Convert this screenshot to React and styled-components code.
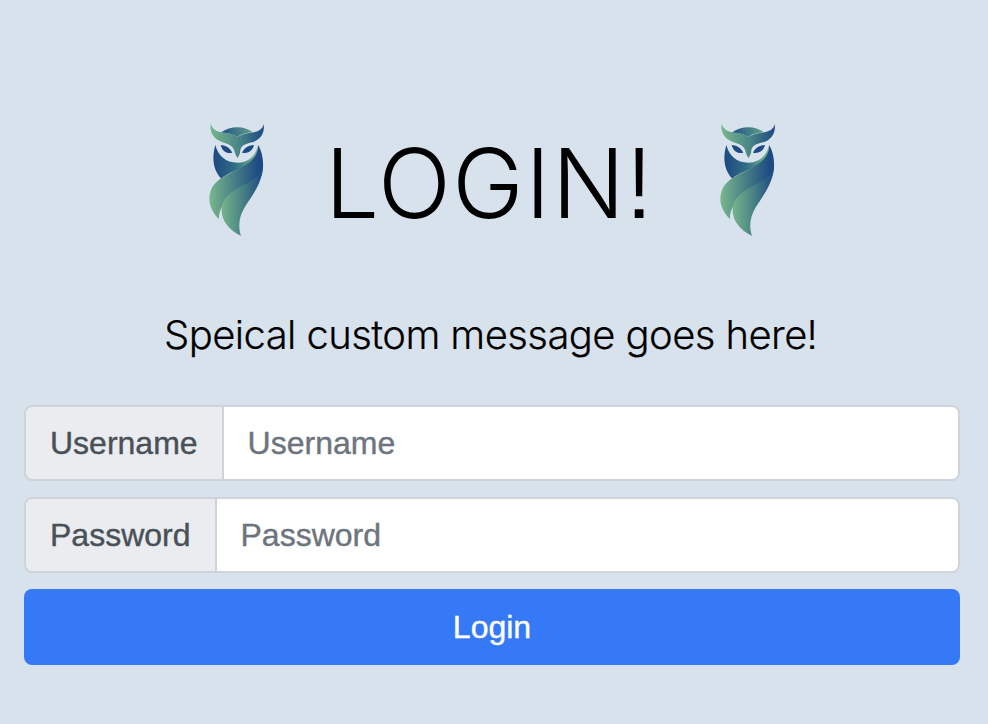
import React from "react";
import styled, { createGlobalStyle } from "styled-components";

const GlobalStyle = createGlobalStyle`
  *, *::before, *::after { box-sizing: border-box; }
  body {
    margin: 0;
    background: #d8e2ec;
    font-family: "Liberation Sans", Arial, sans-serif;
  }
`;

const Page = styled.main`
  min-height: 724px;
  padding: 115px 28px 59px 24px;
  background: #d8e2ec;
`;

const Header = styled.header`
  display: flex;
  justify-content: center;
  height: 130px;
`;

const OwlArt = styled.svg`
  flex: none;
  width: 75px;
  height: 130px;
`;

const Title = styled.h1`
  flex: none;
  width: 436px;
  margin: 0;
  padding: 3px 0 0 51px;
  font: 300 96px/130px "Inter", sans-serif;
  font-feature-settings: "ss07" 1;
  letter-spacing: 1.5px;
  color: #000;
  white-space: nowrap;
`;

const Message = styled.p`
  margin: 65px 0 45px;
  padding-left: 140px;
  font: 300 40px/50px "Inter", sans-serif;
  font-feature-settings: "ss07" 1;
  letter-spacing: -0.59px;
  -webkit-text-stroke: 0.2px #000;
  color: #000;
  white-space: nowrap;
`;

const Form = styled.form`
  display: flex;
  flex-direction: column;
  gap: 16px;
`;

const InputGroup = styled.div`
  display: flex;
  height: 76px;
`;

const FieldLabel = styled.label`
  flex: none;
  padding: 0 24px;
  border: 2px solid #ced4d9;
  border-radius: 8px 0 0 8px;
  background: #eaecef;
  color: #495057;
  font-size: 32px;
  line-height: 72px;
  -webkit-text-stroke: 0.4px currentColor;
`;

const FieldInput = styled.input`
  flex: 1;
  min-width: 0;
  margin-left: -2px;
  padding: 0 24px;
  border: 2px solid #ced4d9;
  border-radius: 0 8px 8px 0;
  background: #fff;
  color: #495057;
  font: 32px "Liberation Sans", Arial, sans-serif;
  outline: none;

  &::placeholder {
    color: #6c757d;
    opacity: 1;
    -webkit-text-stroke: 0.4px #6c757d;
  }
`;

const SubmitButton = styled.button`
  height: 76px;
  padding: 0;
  border: 0;
  border-radius: 8px;
  background: #3579f7;
  color: #fff;
  font: 32px "Liberation Sans", Arial, sans-serif;
  -webkit-text-stroke: 0.4px #fff;
`;

function Owl({ id }) {
  const url = (name) => `url(#${id}-${name})`;
  return (
    <OwlArt viewBox="0 0 225 390" aria-hidden="true">
      <defs>
        <linearGradient id={`${id}-brow`} x1="34" x2="195" y1="0" y2="0" gradientUnits="userSpaceOnUse">
          <stop offset="0" stopColor="#77b58c" />
          <stop offset=".5" stopColor="#4c8986" />
          <stop offset="1" stopColor="#1c4a83" />
        </linearGradient>
        <linearGradient id={`${id}-crown`} x1="65" x2="162" y1="0" y2="0" gradientUnits="userSpaceOnUse">
          <stop offset="0" stopColor="#20508a" />
          <stop offset="1" stopColor="#63a286" />
        </linearGradient>
        <linearGradient id={`${id}-body`} x1="43" x2="192" y1="0" y2="0" gradientUnits="userSpaceOnUse">
          <stop offset="0" stopColor="#1c4982" />
          <stop offset=".45" stopColor="#326e84" />
          <stop offset=".86" stopColor="#74b58a" />
          <stop offset="1" stopColor="#74b58a" />
        </linearGradient>
        <linearGradient id={`${id}-wing`} x1="32" x2="180" y1="0" y2="0" gradientUnits="userSpaceOnUse">
          <stop offset="0" stopColor="#78b78d" />
          <stop offset=".5" stopColor="#477f85" />
          <stop offset="1" stopColor="#1d4a83" />
        </linearGradient>
        <linearGradient id={`${id}-tail`} x1="68" x2="190" y1="0" y2="0" gradientUnits="userSpaceOnUse">
          <stop offset="0" stopColor="#76b48c" />
          <stop offset=".4" stopColor="#518e85" />
          <stop offset="1" stopColor="#1d4a83" />
        </linearGradient>
      </defs>
      <path fill={url("crown")} d="M65 53C80 42 98 37 115 37C134 37 150 43 162 52C145 53 129 57 115 65C100 57 84 53 65 53Z" />
      <path fill={url("body")} d="M49 90C57 122 80 143 116 143C147 143 170 123 177 91C179 113 167 138 143 151C113 168 86 174 67 191C40 164 39 125 49 90Z" />
      <path fill={url("wing")} d="M178 90C194 119 198 164 183 193C160 219 119 218 92 245C74 263 58 286 60 312C38 291 25 262 34 231C42 199 76 182 109 167C153 145 176 129 178 90Z" />
      <path fill={url("tail")} d="M191 159C188 207 159 242 137 277C119 307 117 335 126 363C88 344 65 315 68 279C73 237 118 219 150 202C169 191 184 178 191 159Z" />
      <path fill={url("brow")} d="M35 27C44 50 61 52 79 53C94 54 104 59 115 65C129 58 142 54 157 53C175 51 191 44 194 27C198 54 184 75 159 82C141 87 124 89 123 113C121 121 118 125 115 129C113 124 109 120 107 111C104 91 86 87 69 81C44 73 31 51 35 27Z" />
      <path fill="#1d4b85" d="M65 90C77 91 91 95 100 113C84 118 69 108 65 90ZM165 90C151 91 138 96 129 113C147 117 161 107 165 90Z" />
    </OwlArt>
  );
}

function Field({ name, type }) {
  const id = name.toLowerCase();
  return (
    <InputGroup>
      <FieldLabel htmlFor={id}>{name}</FieldLabel>
      <FieldInput id={id} type={type} placeholder={name} />
    </InputGroup>
  );
}

export default function App() {
  return (
    <>
      <GlobalStyle />
      <Page>
        <Header>
          <Owl id="owl-left" />
          <Title>LOGIN!</Title>
          <Owl id="owl-right" />
        </Header>
        <Message>Speical custom message goes here!</Message>
        <Form onSubmit={(event) => event.preventDefault()}>
          <Field name="Username" type="text" />
          <Field name="Password" type="password" />
          <SubmitButton type="submit">Login</SubmitButton>
        </Form>
      </Page>
    </>
  );
}
